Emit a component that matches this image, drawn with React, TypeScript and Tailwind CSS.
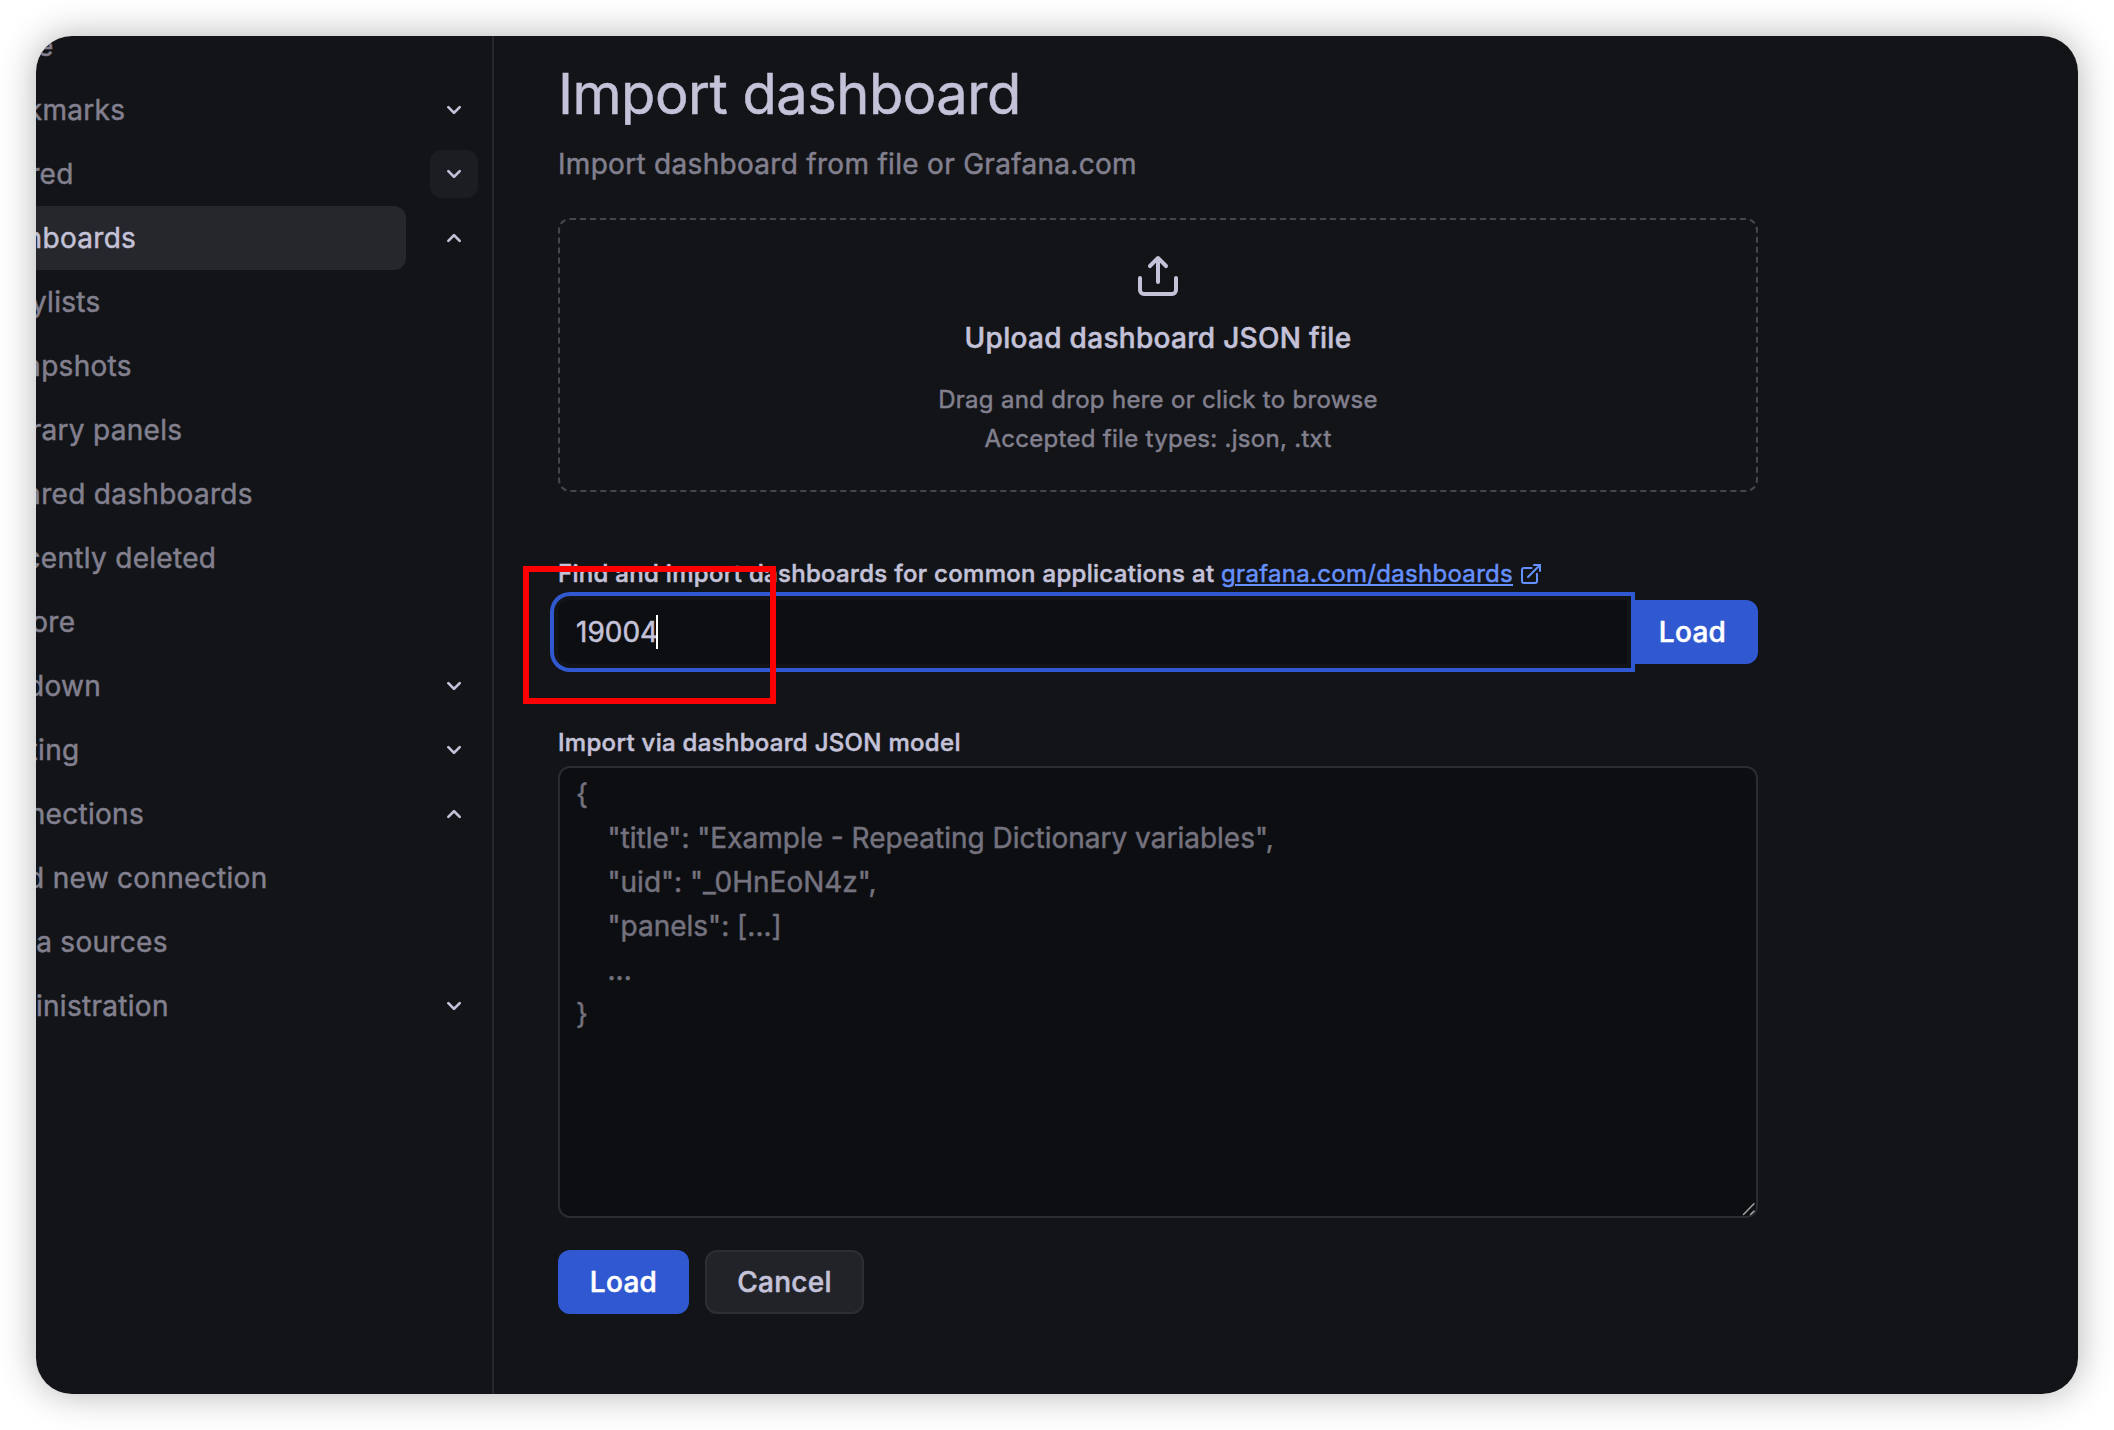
import React from "react";

const ANGLE_DOWN =
  "M17,9.17a1,1,0,0,0-1.41,0L12,12.71,8.46,9.17a1,1,0,0,0-1.41,0,1,1,0,0,0,0,1.42l4.24,4.24a1,1,0,0,0,1.42,0L17,10.59A1,1,0,0,0,17,9.17Z";
const ANGLE_UP =
  "M17,13.41,12.71,9.17a1,1,0,0,0-1.42,0L7.05,13.41a1,1,0,0,0,0,1.42,1,1,0,0,0,1.41,0L12,11.29l3.54,3.54a1,1,0,0,0,.7.29,1,1,0,0,0,.71-.29A1,1,0,0,0,17,13.41Z";
const UPLOAD =
  "M8.71,7.71,11,5.41V15a1,1,0,0,0,2,0V5.41l2.29,2.3a1,1,0,0,0,1.42,0,1,1,0,0,0,0-1.42l-4-4a1,1,0,0,0-.33-.21,1,1,0,0,0-.76,0,1,1,0,0,0-.33.21l-4,4A1,1,0,1,0,8.71,7.71ZM21,12a1,1,0,0,0-1,1v6a1,1,0,0,1-1,1H5a1,1,0,0,1-1-1V13a1,1,0,0,0-2,0v6a3,3,0,0,0,3,3H19a3,3,0,0,0,3-3V13A1,1,0,0,0,21,12Z";

function Icon({ d, className }: { d: string; className: string }) {
  return (
    <svg viewBox="0 0 24 24" fill="currentColor" className={className}>
      <path d={d} />
    </svg>
  );
}

type NavItem = {
  label: string;
  child?: boolean;
  toggle?: "up" | "down";
  active?: boolean;
  hovered?: boolean;
};

const NAV: NavItem[] = [
  { label: "Home" },
  { label: "Bookmarks", toggle: "down" },
  { label: "Starred", toggle: "down", hovered: true },
  { label: "Dashboards", toggle: "up", active: true },
  { label: "Playlists", child: true },
  { label: "Snapshots", child: true },
  { label: "Library panels", child: true },
  { label: "Shared dashboards", child: true },
  { label: "Recently deleted", child: true },
  { label: "Explore" },
  { label: "Drilldown", toggle: "down" },
  { label: "Alerting", toggle: "down" },
  { label: "Connections", toggle: "up" },
  { label: "Add new connection", child: true },
  { label: "Data sources", child: true },
  { label: "Administration", toggle: "down" },
];

function NavRow({ item }: { item: NavItem }) {
  return (
    <li className="flex h-16 items-center">
      <a
        className={`flex h-16 w-[440px] shrink-0 items-center rounded-xl whitespace-nowrap ${
          item.child ? "pl-6" : "pl-2"
        } ${item.active ? "bg-[#26272c] text-[#c4c2d8]" : "text-[#82808f]"}`}
      >
        {item.label}
      </a>
      {item.toggle && (
        <button
          className={`ml-6 flex size-12 items-center justify-center rounded-xl text-[#c4c2d8] ${
            item.hovered ? "bg-[#1c1d22]" : ""
          }`}
        >
          <Icon d={item.toggle === "up" ? ANGLE_UP : ANGLE_DOWN} className="size-8" />
        </button>
      )}
    </li>
  );
}

const PLACEHOLDER = `{
    "title": "Example - Repeating Dictionary variables",
    "uid": "_0HnEoN4z",
    "panels": [...]
    ...
}`;

export default function App() {
  return (
    <div className="h-[1430px] w-[2114px] overflow-hidden bg-white p-9 font-['Inter',sans-serif] text-[28px] leading-[44px] tracking-[0.3px] [-webkit-text-stroke-width:0.5px]">
      <div className="h-[1358px] w-[2042px] rounded-[36px] shadow-[0_0_36px_rgba(0,0,0,0.3)]">
        <div className="flex h-full w-full overflow-hidden rounded-[36px] bg-[#131418] text-[#c4c2d8]">
          <nav className="w-[458px] shrink-0 overflow-hidden border-r-2 border-[#26272b]">
            <ul className="-mt-[22px] -ml-[70px] w-[526px]">
              {NAV.map((item) => (
                <NavRow key={item.label} item={item} />
              ))}
            </ul>
          </nav>

          <main className="ml-16 flex w-[1200px] flex-col">
            <h1 className="mt-[25px] text-[56px] leading-[67px] tracking-[-0.5px]">Import dashboard</h1>
            <p className="mt-[14px] text-[#82808f]">Import dashboard from file or Grafana.com</p>

            <section className="mt-8 flex h-[274px] flex-col items-center rounded-xl border-2 border-dashed border-[#45464c]">
              <Icon d={UPLOAD} className="mt-8 size-12" />
              <div className="mt-4 font-medium">Upload dashboard JSON file</div>
              <small className="mt-5 text-center text-[24px] leading-[39px] text-[#82808f]">
                Drag and drop here or click to browse
                <br />
                Accepted file types: .json, .txt
              </small>
            </section>

            <label className="mt-16 flex h-9 items-center text-[24px] leading-9 font-medium">
              <span>Find and import dashboards for common applications at&nbsp;</span>
              <a className="font-normal text-[#6590ff] underline decoration-2 underline-offset-2">
                grafana.com/dashboards
              </a>
              <svg
                viewBox="0 0 24 24"
                className="ml-[6px] size-6 fill-none stroke-[#6590ff]"
                strokeWidth="2"
                strokeLinecap="round"
              >
                <path d="M12.5 6H5a2 2 0 0 0-2 2v11a2 2 0 0 0 2 2h11a2 2 0 0 0 2-2v-7.2" />
                <path d="M15 3h6v6M21 3 9 15" />
              </svg>
            </label>
            <div className="mt-2 flex h-16">
              <div className="relative z-10 flex w-[1069px] shrink-0 items-center rounded-l-xl bg-[#0d0e12] pl-[18px] tracking-normal shadow-[0_0_0_4px_#131418,0_0_0_8px_#3058d0]">
                <span>19004</span>
                <span className="-ml-[2px] h-[34px] w-[2px] bg-white" />
              </div>
              <button className="flex w-[131px] items-center justify-center rounded-r-xl bg-[#3058d0] font-medium text-white">
                Load
              </button>
            </div>

            <label className="mt-[61px] text-[24px] leading-9 font-medium">
              Import via dashboard JSON model
            </label>
            <div className="relative mt-[5px] h-[452px] rounded-xl border-2 border-[#2b2c31] bg-[#0d0e12] px-4 py-1">
              <pre className="font-['Inter',sans-serif] tracking-normal text-[#74727e]">{PLACEHOLDER}</pre>
              <svg
                viewBox="0 0 14 14"
                className="absolute right-0 bottom-0 size-[14px] stroke-[#a0a0a0]"
                strokeWidth="1.6"
                strokeLinecap="round"
              >
                <path d="M1.5 12.5 12 1.8M8.5 12.5 12 9.2" />
              </svg>
            </div>

            <div className="mt-8 flex h-16 gap-4">
              <button className="w-[131px] rounded-xl bg-[#3058d0] font-medium text-white">Load</button>
              <button className="w-[159px] rounded-xl border-2 border-[#2d2e33] bg-[#222328] font-medium">
                Cancel
              </button>
            </div>
          </main>
        </div>
      </div>
      {/* Annotation rectangle over the dashboard id field */}
      <div className="absolute top-[566px] left-[523px] z-20 h-[138px] w-[253px] border-6 border-[#ff0000]" />
    </div>
  );
}
